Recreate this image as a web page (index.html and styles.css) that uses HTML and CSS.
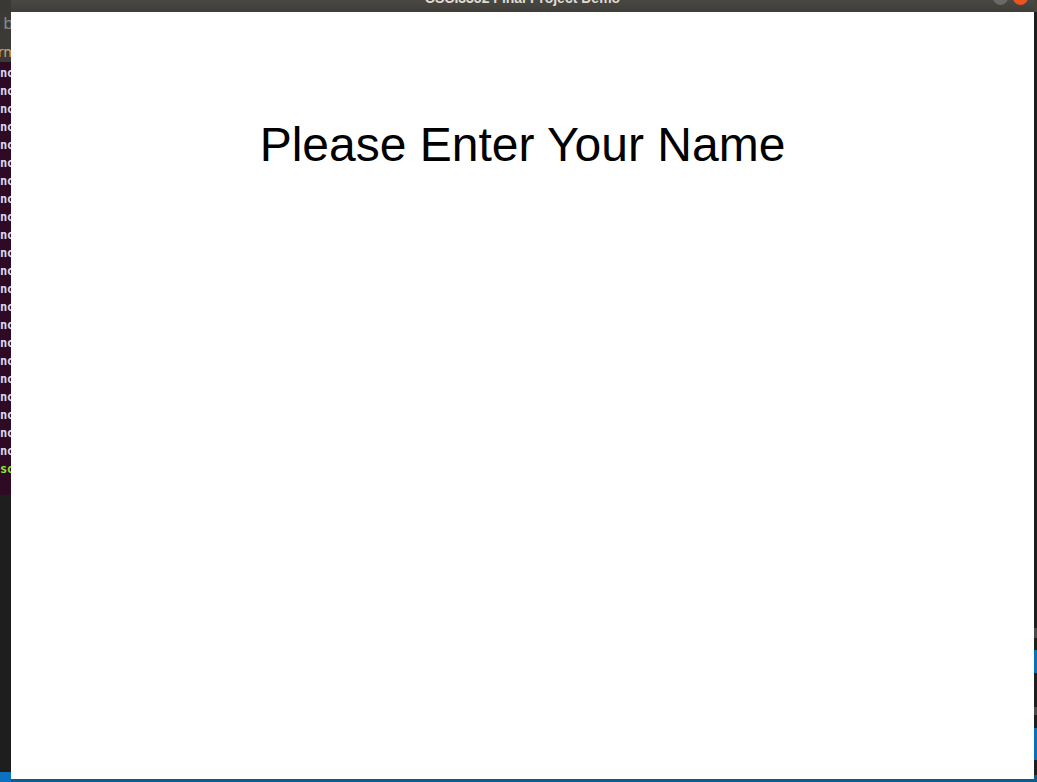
FILE: index.html
```html
<!DOCTYPE html>
<html>
<head>
<meta charset="utf-8">
<title>Final Project Demo</title>
<link rel="stylesheet" href="styles.css">
</head>
<body>
<div class="desktop">
  <div class="left-strip">
    <div class="ls-top"></div>
    <div class="ls-tabs"><span class="ls-b">b</span></div>
    <div class="ls-term-title"><span class="ls-erm">erm</span></div>
    <div class="terminal">
      <div class="tline">no</div><div class="tline">no</div><div class="tline">no</div><div class="tline">no</div>
      <div class="tline">no</div><div class="tline">no</div><div class="tline">no</div><div class="tline">no</div>
      <div class="tline">no</div><div class="tline">no</div><div class="tline">no</div><div class="tline">no</div>
      <div class="tline">no</div><div class="tline">no</div><div class="tline">no</div><div class="tline">no</div>
      <div class="tline">no</div><div class="tline">no</div><div class="tline">no</div><div class="tline">no</div>
      <div class="tline">no</div><div class="tline">no</div>
      <div class="tline green">so</div>
    </div>
    <div class="ls-dark"></div>
    <div class="ls-blue"></div>
  </div>

  <div class="window">
    <div class="titlebar">
      <div class="tb-side"></div>
      <div class="tb-title">CSCI3352 Final Project Demo</div>
      <div class="tb-side tb-buttons">
        <span class="btn btn-min"></span>
        <span class="btn btn-close"></span>
      </div>
    </div>
    <div class="canvas">
      <h1 class="prompt">Please Enter Your Name</h1>
    </div>
    <div class="bottom-bar"></div>
  </div>

  <div class="right-strip">
    <div class="rs rs-top"></div>
    <div class="rs rs-d1"></div>
    <div class="rs rs-g1"></div>
    <div class="rs rs-d2"></div>
    <div class="rs rs-b1"></div>
    <div class="rs rs-d3"></div>
    <div class="rs rs-g2"></div>
    <div class="rs rs-d4"></div>
    <div class="rs rs-b2"></div>
    <div class="rs rs-d5"></div>
    <div class="rs rs-end"></div>
  </div>
</div>
</body>
</html>
```

FILE: styles.css
```css
html, body {
  margin: 0;
  padding: 0;
}

body {
  width: 1037px;
  height: 782px;
  overflow: hidden;
  background: #1e1e1e;
  font-family: "Liberation Sans", Arial, sans-serif;
}

.desktop {
  display: grid;
  grid-template-columns: 11px 1023px 3px;
  height: 782px;
}

/* ---------- left strip (background apps) ---------- */
.left-strip {
  display: flex;
  flex-direction: column;
  overflow: hidden;
  height: 782px;
}

.ls-top {
  height: 12px;
  background: #393834;
}

.ls-tabs {
  height: 30px;
  background: #3b3a36;
  display: flex;
  justify-content: flex-end;
  align-items: center;
  overflow: hidden;
}

.ls-b {
  font-family: "Liberation Sans", sans-serif;
  font-size: 17px;
  color: #8a8a86;
  margin-right: -2px;
  margin-top: -6px;
}

.ls-term-title {
  height: 20px;
  background: #3b3a36;
  display: flex;
  justify-content: flex-end;
  align-items: center;
  overflow: hidden;
}

.ls-erm {
  font-family: "DejaVu Sans", sans-serif;
  font-size: 14px;
  color: #d4a46c;
  margin-right: -6px;
  white-space: nowrap;
}

.terminal {
  height: 433px;
  background: #2f0a24;
  padding-top: 2px;
  box-sizing: border-box;
  overflow: hidden;
}

.tline {
  height: 18px;
  line-height: 18px;
  font-family: "DejaVu Sans Mono", monospace;
  font-weight: bold;
  font-size: 12px;
  color: #d7dcec;
  text-align: right;
  margin-right: -1px;
  white-space: nowrap;
}

.tline.green {
  color: #8ae234;
}

.ls-dark {
  flex: 1;
  background: #1e1e1e;
}

.ls-blue {
  height: 10px;
  background: #0b72bf;
}

/* ---------- main window ---------- */
.window {
  display: flex;
  flex-direction: column;
  height: 782px;
}

.titlebar {
  height: 12px;
  background: linear-gradient(#4a4843, #3f3d39);
  display: grid;
  grid-template-columns: 1fr auto 1fr;
  overflow: hidden;
}

.tb-title {
  font-family: "Liberation Sans", Arial, sans-serif;
  font-weight: bold;
  font-size: 14px;
  line-height: 14px;
  color: #dfdbd2;
  margin-top: -9px;
  white-space: nowrap;
}

.tb-buttons {
  display: flex;
  justify-content: flex-end;
  gap: 5px;
  margin-right: 6px;
}

.btn {
  width: 15px;
  height: 15px;
  border-radius: 50%;
  margin-top: -10px;
}

.btn-min {
  background: #6a6965;
}

.btn-close {
  background: #e9541f;
}

.canvas {
  flex: 1;
  background: #ffffff;
  display: flex;
  justify-content: center;
  align-items: flex-start;
  padding-top: 109px;
}

.prompt {
  margin: 0;
  font-family: "Liberation Sans", Arial, sans-serif;
  font-weight: normal;
  font-size: 48px;
  line-height: 48px;
  color: #000000;
  white-space: nowrap;
}

.bottom-bar {
  height: 3px;
  background: #0b5b90;
}

/* ---------- right strip ---------- */
.right-strip {
  display: flex;
  flex-direction: column;
  height: 782px;
}

.rs { background: #1e1e1e; }
.rs-top { height: 12px; background: #45433e; }
.rs-d1 { height: 616px; }
.rs-g1 { height: 10px; background: #4a4a4a; }
.rs-d2 { height: 12px; }
.rs-b1 { height: 23px; background: #0b6fb8; }
.rs-d3 { height: 34px; }
.rs-g2 { height: 8px; background: #4a4a4a; }
.rs-d4 { height: 13px; }
.rs-b2 { height: 32px; background: #0b6fb8; }
.rs-d5 { height: 15px; }
.rs-end { flex: 1; background: #0b5b90; }
```
